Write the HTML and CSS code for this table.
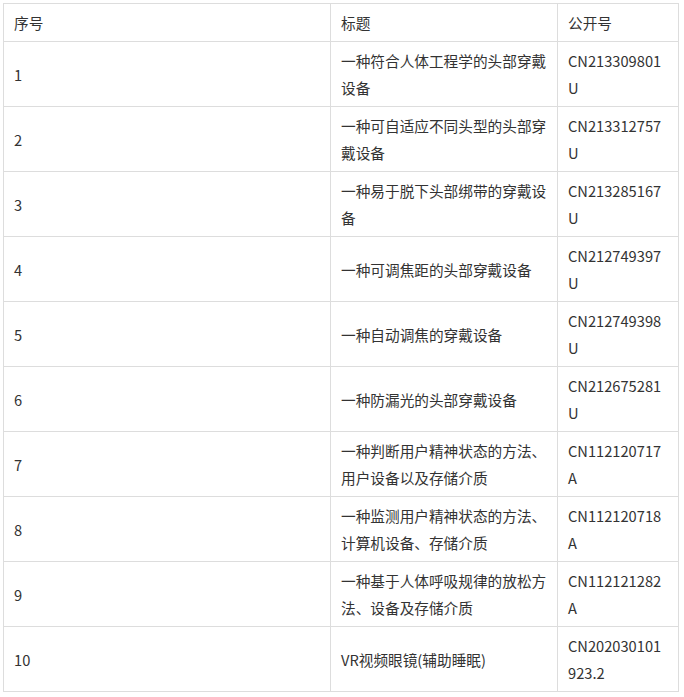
FILE: index.html
```html
<!DOCTYPE html>
<html lang="zh-CN">
<head>
<meta charset="utf-8">
<link rel="stylesheet" href="styles.css">
</head>
<body>
<table class="patents">
  <colgroup>
    <col class="c-no">
    <col class="c-title">
    <col class="c-pub">
  </colgroup>
  <thead>
    <tr><th>序号</th><th>标题</th><th>公开号</th></tr>
  </thead>
  <tbody>
    <tr><td>1</td><td>一种符合人体工程学的头部穿戴设备</td><td>CN213309801U</td></tr>
    <tr><td>2</td><td>一种可自适应不同头型的头部穿戴设备</td><td>CN213312757U</td></tr>
    <tr><td>3</td><td>一种易于脱下头部绑带的穿戴设备</td><td>CN213285167U</td></tr>
    <tr><td>4</td><td>一种可调焦距的头部穿戴设备</td><td>CN212749397U</td></tr>
    <tr><td>5</td><td>一种自动调焦的穿戴设备</td><td>CN212749398U</td></tr>
    <tr><td>6</td><td>一种防漏光的头部穿戴设备</td><td>CN212675281U</td></tr>
    <tr><td>7</td><td>一种判断用户精神状态的方法、用户设备以及存储介质</td><td>CN112120717A</td></tr>
    <tr><td>8</td><td>一种监测用户精神状态的方法、计算机设备、存储介质</td><td>CN112120718A</td></tr>
    <tr><td>9</td><td>一种基于人体呼吸规律的放松方法、设备及存储介质</td><td>CN112121282A</td></tr>
    <tr><td>10</td><td>VR视频眼镜(辅助睡眠)</td><td>CN202030101923.2</td></tr>
  </tbody>
</table>
</body>
</html>
```

FILE: styles.css
```css
html, body {
  margin: 0;
  padding: 0;
  background: #ffffff;
}
body {
  padding: 3px;
  font-family: "Noto Sans CJK SC", "Noto Sans", sans-serif;
  font-size: 11pt;
  color: #333333;
}
.patents {
  border-collapse: collapse;
  table-layout: fixed;
  width: 675px;
}
.c-no { width: 327px; }
.c-title { width: 227px; }
.c-pub { width: 121px; }
.patents th,
.patents td {
  border: 1px solid #dddddd;
  padding: 5px 10px;
  line-height: 27px;
  text-align: left;
  vertical-align: middle;
  font-weight: normal;
  word-break: break-all;
}
.patents thead th {
  height: 27px;
}
.patents tbody td {
  height: 54px;
}
```
